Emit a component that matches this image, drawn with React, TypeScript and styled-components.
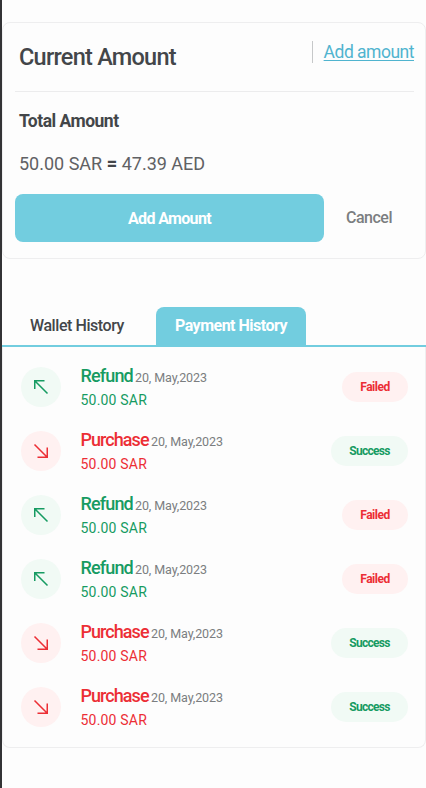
import React from "react";
import styled, { createGlobalStyle } from "styled-components";

const GlobalStyle = createGlobalStyle`
  * { box-sizing: border-box; }
  body { margin: 0; background: #fdfdfd; font-family: Roboto, "Liberation Sans", sans-serif; }
  button { font: inherit; border: 0; padding: 0; background: none; cursor: pointer; }
`;

const green = "#169b62";
const red = "#ec2e35";
const teal = "#72cddf";

const Page = styled.main`
  width: 426px;
  height: 788px;
  overflow: hidden;
  border-left: 2px solid #333335;
  padding-top: 22px;
  white-space: nowrap;
`;

const AmountCard = styled.section`
  height: 237px;
  border: 1px solid #eeeeef;
  border-radius: 8px;
  padding: 0 11px 0 12px;
`;

const CardHeader = styled.header`
  height: 69px;
  display: flex;
  align-items: flex-start;
  justify-content: space-between;
  border-bottom: 1px solid #ececed;
  padding-left: 4px;
`;

const Title = styled.h1`
  margin: 20px 0 0;
  font-size: 23.5px;
  line-height: 28px;
  font-weight: 500;
  letter-spacing: -0.75px;
  color: #434649;
`;

const AddLink = styled.a`
  margin-top: 18px;
  height: 22px;
  padding-left: 11px;
  border-left: 1px solid #c6c8c9;
  font-size: 17.5px;
  line-height: 22px;
  letter-spacing: -0.5px;
  color: #50b4cf;
  text-decoration: underline;
  text-decoration-thickness: 1px;
  text-underline-offset: 2px;
`;

const Subtitle = styled.h2`
  margin: 18px 0 0 4px;
  font-size: 17.5px;
  line-height: 22px;
  font-weight: 700;
  letter-spacing: -0.5px;
  color: #434649;
`;

const Conversion = styled.p`
  margin: 21px 0 0 4px;
  font-size: 18px;
  line-height: 22px;
  letter-spacing: 0px;
  color: #606164;
  b { color: #434649; font-weight: 900; }
`;

const Actions = styled.div`
  display: flex;
  margin-top: 19px;
  height: 48px;
`;

const PrimaryButton = styled.button`
  width: 309px;
  border-radius: 8px;
  && { background: ${teal}; }
  color: #fff;
  font-size: 16px;
  font-weight: 700;
  letter-spacing: -0.65px;
`;

const CancelButton = styled.button`
  width: 90px;
  color: #7b7e80;
  font-size: 16px;
  font-weight: 500;
  letter-spacing: -0.5px;
  padding-bottom: 2px;
`;

const History = styled.section`
  margin-top: 48px;
`;

const Tabs = styled.nav`
  height: 40px;
  display: flex;
  border-bottom: 2px solid ${teal};
`;

const Tab = styled.button<{ $active?: boolean }>`
  width: ${(p) => (p.$active ? 150 : 154)}px;
  padding-right: ${(p) => (p.$active ? 0 : 4)}px;
  padding-bottom: 2px;
  border-radius: 8px 8px 0 0;
  && { background: ${(p) => (p.$active ? teal : "transparent")}; }
  color: ${(p) => (p.$active ? "#fff" : "#434649")};
  font-size: 16px;
  font-weight: ${(p) => (p.$active ? 700 : 500)};
  letter-spacing: ${(p) => (p.$active ? -0.5 : -0.43)}px;
`;

const List = styled.ul`
  margin: 0;
  height: 401px;
  padding: 8px 17px 0 18px;
  list-style: none;
  border: 1px solid #eeeeef;
  border-top: 0;
  border-radius: 0 0 8px 8px;
`;

const Row = styled.li`
  height: 64px;
  display: flex;
  align-items: center;
`;

const IconCircle = styled.span<{ $refund: boolean }>`
  width: 40px;
  height: 40px;
  border-radius: 50%;
  display: grid;
  place-items: center;
  color: ${(p) => (p.$refund ? green : red)};
  background: ${(p) => (p.$refund ? "#f1faf5" : "#fff1f1")};
`;

const Details = styled.div<{ $refund: boolean }>`
  margin-left: 19.5px;
  flex: 1;
  color: ${(p) => (p.$refund ? green : red)};
`;

const Heading = styled.div`
  display: flex;
  align-items: baseline;
  height: 24px;
  line-height: 24px;
`;

const Kind = styled.strong<{ $refund: boolean }>`
  width: ${(p) => (p.$refund ? 54.5 : 70.5)}px;
  font-size: 18px;
  font-weight: 500;
  letter-spacing: ${(p) => (p.$refund ? -0.85 : -0.95)}px;
`;

const DateText = styled.time`
  font-size: 12.5px;
  letter-spacing: -0.1px;
  color: #7b7e80;
`;

const Sum = styled.div`
  font-size: 14px;
  line-height: 22px;
  height: 22px;
  padding-top: 1px;
  letter-spacing: 0.2px;
`;

const Status = styled.span<{ $ok: boolean }>`
  width: ${(p) => (p.$ok ? 77 : 66)}px;
  height: 30px;
  border-radius: 15px;
  text-align: center;
  font-size: 12px;
  line-height: 30px;
  font-weight: 700;
  letter-spacing: ${(p) => (p.$ok ? -0.7 : -0.5)}px;
  color: ${(p) => (p.$ok ? green : red)};
  background: ${(p) => (p.$ok ? "#f1faf5" : "#fff1f1")};
`;

function Arrow({ refund }: { refund: boolean }) {
  return (
    <svg width="16" height="16" viewBox="0 0 16 16" fill="none" stroke="currentColor" strokeWidth="1.5">
      <path d={refund ? "M14.5 14.5 1.75 1.75M1.75 10V1.75H11.5" : "M1.5 1.5 14.25 14.25M14.25 4.5V14.25H4.5"} />
    </svg>
  );
}

const rows = [true, false, true, true, false, false];

export default function App() {
  return (
    <Page>
      <GlobalStyle />
      <AmountCard>
        <CardHeader>
          <Title>Current Amount</Title>
          <AddLink>Add amount</AddLink>
        </CardHeader>
        <Subtitle>Total Amount</Subtitle>
        <Conversion>50.00 SAR <b>=</b> 47.39 AED</Conversion>
        <Actions>
          <PrimaryButton>Add Amount</PrimaryButton>
          <CancelButton>Cancel</CancelButton>
        </Actions>
      </AmountCard>
      <History>
        <Tabs>
          <Tab>Wallet History</Tab>
          <Tab $active>Payment History</Tab>
        </Tabs>
        <List>
          {rows.map((refund, i) => (
            <Row key={i}>
              <IconCircle $refund={refund}><Arrow refund={refund} /></IconCircle>
              <Details $refund={refund}>
                <Heading>
                  <Kind $refund={refund}>{refund ? "Refund" : "Purchase"}</Kind>
                  <DateText>20, May,2023</DateText>
                </Heading>
                <Sum>50.00 SAR</Sum>
              </Details>
              <Status $ok={!refund}>{refund ? "Failed" : "Success"}</Status>
            </Row>
          ))}
        </List>
      </History>
    </Page>
  );
}
